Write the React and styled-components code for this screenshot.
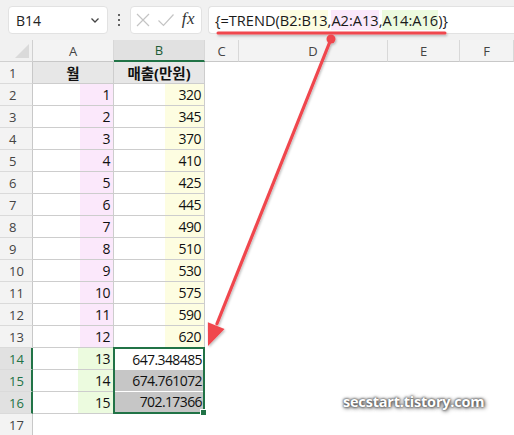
import styled, { createGlobalStyle } from 'styled-components';

const GlobalStyle = createGlobalStyle`
  html, body {
    margin: 0;
    padding: 0;
    background: #ffffff;
  }
  body {
    font-family: "Open Sans", "Noto Sans CJK KR", sans-serif;
    overflow: hidden;
  }
`;

const GREEN = '#217346';
const PINK = '#fbe8fb';
const YELLOW = '#fdfde1';
const LIME = '#ecfbdf';

const COLUMNS = [
  { key: 'A', width: '81px' },
  { key: 'B', width: '91px' },
  { key: 'C', width: '34px' },
  { key: 'D', width: '149px' },
  { key: 'E', width: '72px' },
  { key: 'F', width: '1fr' },
];

const sales = [320, 345, 370, 410, 425, 445, 490, 510, 530, 575, 590, 620];
const forecast = ['647.348485', '674.761072', '702.17366'];

export default function App() {
  return (
    <Page>
      <GlobalStyle />
      <FormulaBar />
      <Sheet>
        <Corner>
          <CornerTriangle />
        </Corner>
        {COLUMNS.map((col) => (
          <ColHeader key={col.key} $selected={col.key === 'B'}>
            {col.key}
          </ColHeader>
        ))}

        <RowHeader>1</RowHeader>
        <Cell $title $align="center">월</Cell>
        <Cell $title $align="center">매출(만원)</Cell>
        <EmptyCells />

        {sales.map((value, i) => (
          <Row key={i}>
            <RowHeader>{i + 2}</RowHeader>
            <Cell $fill={PINK} $fillFrom={47}>{i + 1}</Cell>
            <Cell $fill={YELLOW} $fillFrom={51}>{value}</Cell>
            <EmptyCells />
          </Row>
        ))}

        <RowHeader $selected style={{ gridRow: 15 }}>14</RowHeader>
        <RowHeader $selected>15</RowHeader>
        <RowHeader $selected>16</RowHeader>
        <Cell $fill={LIME} $fillFrom={45} style={{ gridRow: 15, gridColumn: 2 }}>13</Cell>
        <Cell $fill={LIME} $fillFrom={45} style={{ gridRow: 16, gridColumn: 2 }}>14</Cell>
        <Cell $fill={LIME} $fillFrom={45} style={{ gridRow: 17, gridColumn: 2 }}>15</Cell>
        <Selection>
          {forecast.map((v, i) => (
            <SelCell key={v} $shade={i > 0}>{v}</SelCell>
          ))}
          <FillHandle />
        </Selection>
        {[15, 16, 17].map((r) => (
          <Blank key={r} style={{ gridRow: r, gridColumn: '4 / -1' }} />
        ))}

        <RowHeader style={{ gridRow: 18 }}>17</RowHeader>
        <Blank style={{ gridRow: 18, gridColumn: '2 / -1' }} />
      </Sheet>
      <Annotation />
      <Watermark>secstart.tistory.com</Watermark>
    </Page>
  );
}

function Row({ children }) {
  return <>{children}</>;
}

function EmptyCells() {
  return <Blank style={{ gridColumn: '4 / -1' }} />;
}

function FormulaBar() {
  return (
    <Toolbar>
      <NameBox>
        <span>B14</span>
        <svg width="12" height="12" viewBox="0 0 12 12">
          <path d="M2.5 4.5 L6 8 L9.5 4.5" fill="none" stroke="#444" strokeWidth="1.3" />
        </svg>
      </NameBox>
      <Dots>
        <i />
        <i />
        <i />
      </Dots>
      <FxBox>
        <svg width="16" height="16" viewBox="0 0 16 16">
          <path d="M2 2 L14 14 M14 2 L2 14" stroke="#c4c4c4" strokeWidth="1.2" fill="none" />
        </svg>
        <svg width="18" height="16" viewBox="0 0 18 16">
          <path d="M1.5 8.5 L6.5 13.5 L16.5 2.5" stroke="#c4c4c4" strokeWidth="1.2" fill="none" />
        </svg>
        <Fx>fx</Fx>
      </FxBox>
      <FormulaInput>
        {'{=TREND('}
        <Ref $bg={YELLOW}>B2:B13</Ref>,<Ref $bg={PINK}>A2:A13</Ref>,<Ref $bg={LIME}>A14:A16</Ref>
        {')}'}
      </FormulaInput>
    </Toolbar>
  );
}

function Annotation() {
  const tip = [208, 346];
  const ux = -0.373;
  const uy = 0.928;
  const len = 22;
  const hw = 9;
  const bx = tip[0] - ux * len;
  const by = tip[1] - uy * len;
  const p1 = [bx + uy * hw, by - ux * hw];
  const p2 = [bx - uy * hw, by + ux * hw];
  return (
    <Overlay width="514" height="435" viewBox="0 0 514 435">
      <defs>
        <filter id="sh" x="-10%" y="-10%" width="120%" height="120%">
          <feDropShadow dx="1" dy="1.5" stdDeviation="1.2" floodColor="#000" floodOpacity="0.25" />
        </filter>
      </defs>
      <g filter="url(#sh)" stroke="#f0464e" fill="#f0464e" strokeLinecap="round">
        <line x1="218" y1="33" x2="445" y2="33" strokeWidth="3" />
        <circle cx="331" cy="39" r="4.5" stroke="none" />
        <line x1="331" y1="39" x2={bx + ux * -2} y2={by + uy * -2} strokeWidth="3.2" />
        <polygon points={`${tip[0]},${tip[1]} ${p1[0]},${p1[1]} ${p2[0]},${p2[1]}`} stroke="none" />
      </g>
    </Overlay>
  );
}

const Page = styled.div`
  position: relative;
  width: 514px;
  height: 435px;
  overflow: hidden;
  background: #ffffff;
`;

const Toolbar = styled.div`
  display: flex;
  align-items: center;
  height: 40px;
  padding: 0 0 0 8px;
  box-sizing: border-box;
  background: #f1f1f1;
`;

const Box = styled.div`
  height: 28px;
  box-sizing: border-box;
  background: #ffffff;
  border: 1px solid #e2e2e2;
  border-radius: 4px;
  display: flex;
  align-items: center;
`;

const NameBox = styled(Box)`
  width: 100px;
  justify-content: space-between;
  padding: 0 6px 0 7px;
  font-size: 14px;
  color: #222;
`;

const Dots = styled.div`
  width: 22px;
  display: flex;
  flex-direction: column;
  align-items: center;
  gap: 3px;
  i {
    width: 2px;
    height: 2px;
    background: #333;
    border-radius: 50%;
  }
`;

const FxBox = styled(Box)`
  width: 72px;
  padding: 0 6px 0 4px;
  gap: 5px;
  justify-content: space-between;
`;

const Fx = styled.span`
  font-family: "Liberation Serif", serif;
  font-style: italic;
  font-size: 17px;
  color: #333;
  letter-spacing: 0.5px;
  margin-top: -2px;
`;

const FormulaInput = styled(Box)`
  flex: 1;
  margin-left: 6px;
  margin-right: -12px;
  padding-left: 6px;
  border-right: none;
  font-size: 14.6px;
  color: #1a1a1a;
  white-space: nowrap;
`;

const Ref = styled.span`
  background: ${(p) => p.$bg};
`;

const Sheet = styled.div`
  display: grid;
  grid-template-columns: 33px ${COLUMNS.map((c) => c.width).join(' ')};
  grid-auto-rows: 22px;
  font-size: 14px;
`;

const Corner = styled.div`
  position: relative;
  background: #f1f1f1;
  border-right: 1px solid #d0d0d0;
  border-bottom: 1px solid #d0d0d0;
`;

const CornerTriangle = styled.div`
  position: absolute;
  right: 3px;
  bottom: 3px;
  width: 0;
  height: 0;
  border-left: 14px solid transparent;
  border-bottom: 14px solid #dadada;
`;

const ColHeader = styled.div`
  display: flex;
  align-items: center;
  justify-content: center;
  font-size: 13px;
  color: ${(p) => (p.$selected ? '#1e5c36' : '#444')};
  background: ${(p) => (p.$selected ? '#e1e1e1' : '#f3f3f3')};
  border-right: 1px solid #d8d8d8;
  border-bottom: ${(p) => (p.$selected ? `2px solid ${GREEN}` : '1px solid #c8c8c8')};
  box-sizing: border-box;
`;

const RowHeader = styled.div`
  grid-column: 1;
  display: flex;
  align-items: center;
  padding-left: 9px;
  font-size: 13px;
  color: ${(p) => (p.$selected ? GREEN : '#444')};
  background: ${(p) => (p.$selected ? '#e1e1e1' : '#f3f3f3')};
  border-right: ${(p) => (p.$selected ? `2px solid ${GREEN}` : '1px solid #c8c8c8')};
  border-bottom: 1px solid #dadada;
  box-sizing: border-box;
`;

const Cell = styled.div`
  display: flex;
  align-items: center;
  justify-content: ${(p) => (p.$align === 'center' ? 'center' : 'flex-end')};
  padding: 0 3px;
  box-sizing: border-box;
  color: #111;
  font-weight: ${(p) => (p.$title ? 700 : 400)};
  font-size: ${(p) => (p.$title ? '14.5px' : '14px')};
  letter-spacing: ${(p) => (p.$title ? '0' : '-0.5px')};
  background: ${(p) =>
    p.$title
      ? '#e7e7e7'
      : p.$fill
      ? `linear-gradient(to right, #fff ${p.$fillFrom}px, ${p.$fill} ${p.$fillFrom}px)`
      : '#fff'};
  border-right: 1px solid #cdcdcd;
  border-bottom: 1px solid #cdcdcd;
`;

const Blank = styled.div`
  background: #fff;
`;

const Selection = styled.div`
  grid-row: 15 / span 3;
  grid-column: 3;
  position: relative;
  display: flex;
  flex-direction: column;
  border: 2px solid ${GREEN};
  margin: -1px 0 0 -1px;
  box-sizing: border-box;
`;

const SelCell = styled.div`
  flex: 1;
  display: flex;
  align-items: center;
  justify-content: flex-end;
  padding-right: 1px;
  color: #111;
  background: ${(p) => (p.$shade ? '#c6c6c6' : '#fff')};
  border-top: ${(p) => (p.$shade ? '1px solid #fff' : 'none')};
  font-size: 14px;
  letter-spacing: -0.6px;
`;

const FillHandle = styled.div`
  position: absolute;
  right: -4px;
  bottom: -4px;
  width: 5px;
  height: 5px;
  background: ${GREEN};
  border: 1px solid #fff;
`;

const Overlay = styled.svg`
  position: absolute;
  inset: 0;
  pointer-events: none;
`;

const Watermark = styled.div`
  position: absolute;
  left: 343px;
  top: 392px;
  font-family: "Open Sans", sans-serif;
  font-weight: 700;
  font-size: 14.5px;
  color: #ffffff;
  letter-spacing: -0.2px;
  text-shadow: 0 0 2px #555, 0 0 3px #555, 1px 1px 4px #333;
`;
